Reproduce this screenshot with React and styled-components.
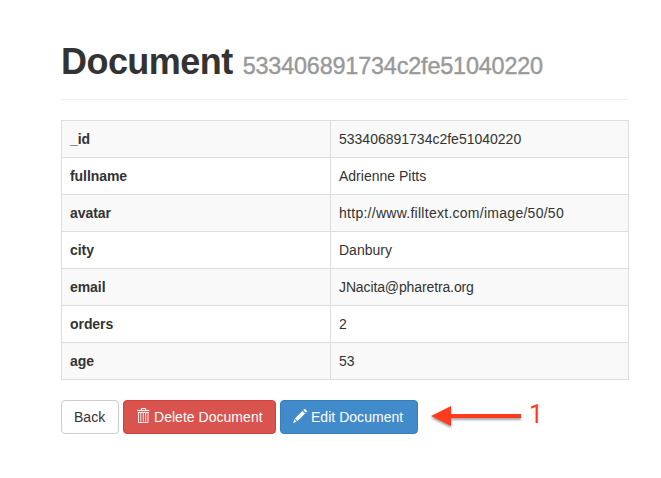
import React from "react";
import styled, { createGlobalStyle } from "styled-components";

const GlobalStyle = createGlobalStyle`
  *, *::before, *::after { box-sizing: border-box; }
  body {
    margin: 0;
    background: #fff;
    color: #333;
    font: 14px/20px "Helvetica Neue", "Liberation Sans", Arial, sans-serif;
  }
`;

const Page = styled.main`
  width: 568px;
  margin-left: 61px;
  padding-top: 42px;
`;

const PageHeader = styled.header`
  height: 58px;
  margin-bottom: 20px;
  border-bottom: 1px solid #eee;
`;

const Title = styled.h1`
  margin: 0;
  font-size: 36px;
  font-weight: 400;
  line-height: 40px;
  white-space: nowrap;
`;

const TitleText = styled.span`
  font-weight: 700;
  letter-spacing: -0.55px;
`;

const DocumentId = styled.small`
  margin-left: 10px;
  font-size: 23.4px;
  letter-spacing: -0.17px;
  color: #999;
  -webkit-text-stroke: 0.4px #999;
`;

const Table = styled.table`
  width: 100%;
  margin-bottom: 20px;
  border: 1px solid #ddd;
  border-collapse: collapse;
  table-layout: fixed;
`;

const Row = styled.tr`
  height: 37px;
  &:nth-child(odd) { background: #f9f9f9; }
`;

const Label = styled.th`
  width: 269px;
  padding: 8px;
  border: 1px solid #ddd;
  text-align: left;
  font-weight: 700;
  letter-spacing: -0.06px;
`;

const Value = styled.td`
  padding: 8px;
  border: 1px solid #ddd;
  letter-spacing: ${({ $tracking }) => $tracking || 0}px;
`;

const Actions = styled.div`
  display: flex;
  align-items: center;
  gap: 4px;
`;

const variants = {
  plain: { bg: "#fff", border: "#ccc", color: "#333" },
  danger: { bg: "#d9534f", border: "#d43f3a", color: "#fff" },
  primary: { bg: "#428bca", border: "#357ebd", color: "#fff" },
};

const Button = styled.button`
  display: flex;
  align-items: center;
  gap: 4px;
  width: ${({ $width }) => $width}px;
  height: 34px;
  padding: 0 12px;
  border: 1px solid ${({ $variant }) => variants[$variant].border};
  border-radius: 4px;
  background: ${({ $variant }) => variants[$variant].bg};
  color: ${({ $variant }) => variants[$variant].color};
  font: inherit;
  letter-spacing: 0.03px;
  white-space: nowrap;
`;

const Icon = styled.svg`
  flex: none;
  width: 14px;
  height: 16px;
  margin-top: -4px;
  overflow: visible;
`;

const Annotation = styled.div`
  display: flex;
  align-items: center;
  margin-left: 9px;
  color: #ff3b1f;
  font: 400 25px/20px Roboto, "Liberation Sans", sans-serif;
`;

const Arrow = styled.svg`
  width: 98px;
  height: 30px;
  margin-top: -2px;
  filter: drop-shadow(0 2px 1px rgba(0, 0, 0, 0.35));
`;

const Step = styled.span`
  margin-top: -5px;
`;

const fields = [
  { label: "_id", value: "533406891734c2fe51040220" },
  { label: "fullname", value: "Adrienne Pitts" },
  { label: "avatar", value: "http://www.filltext.com/image/50/50", tracking: 0.27 },
  { label: "city", value: "Danbury" },
  { label: "email", value: "JNacita@pharetra.org", tracking: -0.12 },
  { label: "orders", value: "2" },
  { label: "age", value: "53" },
];

function TrashIcon() {
  return (
    <Icon viewBox="0 0 14 16" fill="none" stroke="#fff">
      <path d="M5.5 3V1.5h4V3" />
      <path d="M1.2 3.5h12.2" strokeWidth="1.3" />
      <path d="M1.8 5.5h11M2.5 5v10.5h9.5V5M4.8 6v8.5M7.3 6v8.5M9.7 6v8.5" strokeWidth="0.9" />
    </Icon>
  );
}

function PencilIcon() {
  return (
    <Icon viewBox="0 0 14 16" fill="#fff">
      <path d="M11.2 2.2q.6-.6 1.2 0l1.5 1.5q.5.5 0 1l-1 1-2.7-2.7zM9.4 3.9l2.7 2.7-7.5 7.5-2.7-2.7zM1.3 12.3l2.4 2.4L.2 16z" />
    </Icon>
  );
}

export default function App() {
  return (
    <>
      <GlobalStyle />
      <Page>
        <PageHeader>
          <Title>
            <TitleText>Document</TitleText>
            <DocumentId>533406891734c2fe51040220</DocumentId>
          </Title>
        </PageHeader>
        <Table>
          <tbody>
            {fields.map(({ label, value, tracking }) => (
              <Row key={label}>
                <Label scope="row">{label}</Label>
                <Value $tracking={tracking}>{value}</Value>
              </Row>
            ))}
          </tbody>
        </Table>
        <Actions>
          <Button $variant="plain" $width={58}>Back</Button>
          <Button $variant="danger" $width={153}>
            <TrashIcon />
            Delete Document
          </Button>
          <Button $variant="primary" $width={138}>
            <PencilIcon />
            Edit Document
          </Button>
          <Annotation>
            <Arrow viewBox="0 0 98 30">
              <path d="M0 15L20 5v8h70v4H20v8z" fill="#ff3b1f" />
            </Arrow>
            <Step>1</Step>
          </Annotation>
        </Actions>
      </Page>
    </>
  );
}
